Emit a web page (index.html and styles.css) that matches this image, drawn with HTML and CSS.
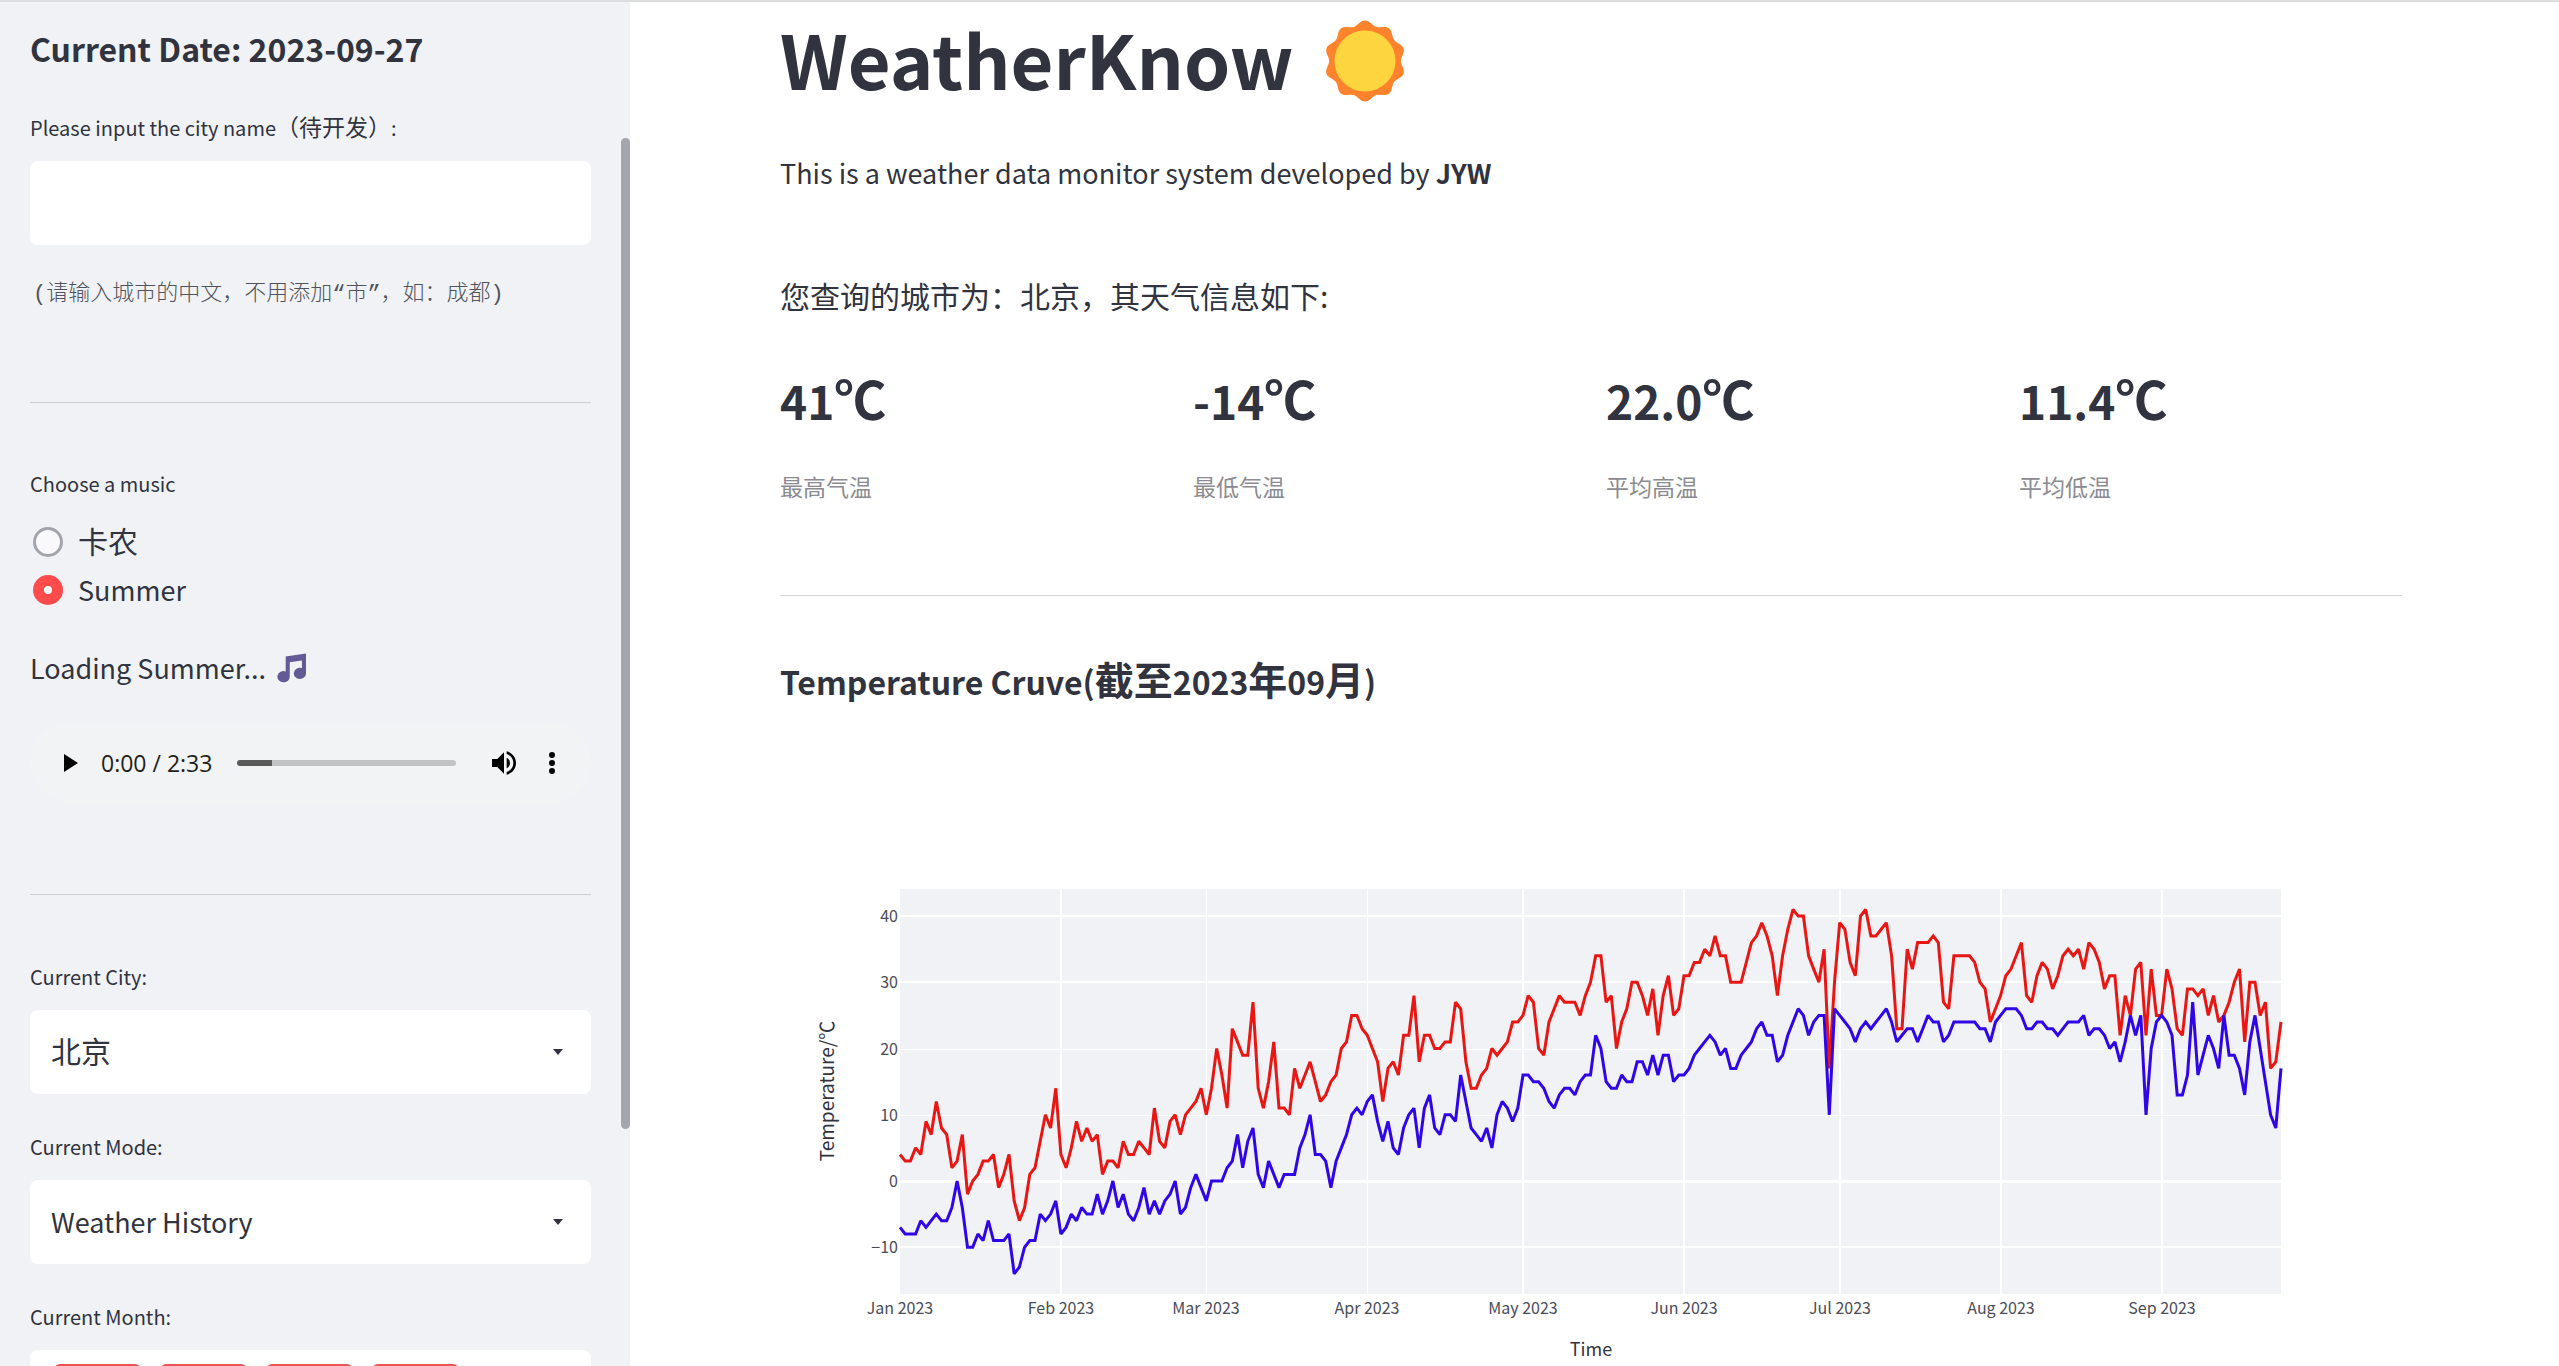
FILE: index.html
```html
<!DOCTYPE html>
<html lang="en">
<head>
<meta charset="utf-8">
<title>WeatherKnow</title>
<link rel="stylesheet" href="styles.css">
</head>
<body>
<div class="app">
  <aside class="sidebar">
    <h3 class="date">Current Date: 2023-09-27</h3>

    <label class="label" for="city-name">Please input the city name<span class="cjk">（待开发）</span>:</label>
    <input class="field" id="city-name" type="text">
    <p class="hint">(请输入城市的中文，不用添加“市”，如：成都)</p>

    <hr class="rule">

    <fieldset class="music">
      <legend class="label">Choose a music</legend>
      <label class="option"><input class="radio" type="radio" name="music"><span class="option-cjk">卡农</span></label>
      <label class="option"><input class="radio" type="radio" name="music" checked><span>Summer</span></label>
    </fieldset>
    <p class="loading">Loading Summer...
      <svg class="note" viewBox="0 0 30 30" aria-hidden="true"><path fill="#635994" d="M9 3.2 30 0v20.5a6.3 5.8 0 1 1-4.2-5.4V7.2L13.200 9v15a6.400 5.800 0 1 1-4.200-5.400z"/></svg>
    </p>

    <div class="player">
      <button class="icon-button play" type="button" aria-label="Play"><svg viewBox="0 0 14 18" width="14" height="18"><path d="M0 0v18l14-9z"/></svg></button>
      <span class="time">0:00 / 2:33</span>
      <input class="seek" type="range" min="0" max="153" value="0" aria-label="Seek">
      <button class="icon-button volume" type="button" aria-label="Mute"><svg viewBox="3 3 18 18" width="24" height="24"><path d="M3 9v6h4l5 5V4L7 9H3zm13.500 3A4.500 4.500 0 0 0 14 7.970v8.050c1.480-.73 2.500-2.250 2.500-4.020zM14 3.230v2.060c2.890.86 5 3.540 5 6.710s-2.110 5.850-5 6.710v2.060c4.010-.91 7-4.490 7-8.770s-2.990-7.860-7-8.770z"/></svg></button>
      <button class="icon-button more" type="button" aria-label="More options"><svg viewBox="0 0 6 22" width="6" height="22"><circle cx="3" cy="3" r="3"/><circle cx="3" cy="11" r="3"/><circle cx="3" cy="19" r="3"/></svg></button>
    </div>

    <hr class="rule rule-player">

    <label class="label" for="city">Current City:</label>
    <div class="select">
      <select class="field field-cjk" id="city"><option>北京</option></select>
      <svg class="caret" viewBox="0 0 10 6" width="10" height="6" aria-hidden="true"><path d="M0 0h10L5 6z"/></svg>
    </div>
    <label class="label label-next" for="mode">Current Mode:</label>
    <div class="select">
      <select class="field" id="mode"><option>Weather History</option></select>
      <svg class="caret" viewBox="0 0 10 6" width="10" height="6" aria-hidden="true"><path d="M0 0h10L5 6z"/></svg>
    </div>
    <p class="label label-next">Current Month:</p>
    <div class="tags">
      <span class="tag"></span><span class="tag"></span><span class="tag"></span><span class="tag"></span>
    </div>
    <div class="scroll-thumb"></div>
  </aside>

  <main class="main">
    <h1 class="title">WeatherKnow
      <svg class="sun" viewBox="0 0 78 82" aria-hidden="true"><path id="sun-rays" fill="#ff822d"/><circle cx="39" cy="41" r="30.500" fill="#fcd53f"/></svg>
    </h1>
    <p class="intro">This is a weather data monitor system developed by <strong>JYW</strong></p>
    <p class="query">您查询的城市为：北京，其天气信息如下:</p>

    <section class="metrics">
      <div><h2 class="value">41<span class="unit">℃</span></h2><p class="caption">最高气温</p></div>
      <div><h2 class="value">-14<span class="unit">℃</span></h2><p class="caption">最低气温</p></div>
      <div><h2 class="value">22.0<span class="unit">℃</span></h2><p class="caption">平均高温</p></div>
      <div><h2 class="value">11.4<span class="unit">℃</span></h2><p class="caption">平均低温</p></div>
    </section>

    <hr class="rule rule-main">

    <h3 class="chart-title">Temperature Cruve(<span class="title-cjk">截至</span>2023<span class="title-cjk">年</span>09<span class="title-cjk">月</span>)</h3>
    <svg class="chart" id="chart" viewBox="0 0 1622 496" role="img" aria-label="Temperature by day"></svg>
  </main>
</div>
<script src="chart.js"></script>
</body>
</html>
```
FILE: styles.css
```css
* { box-sizing: border-box; }

body {
  margin: 0;
  color: #31333f;
  background: #fff;
  font: 27px/48px "Noto Sans CJK SC", "Noto Sans", sans-serif;
}

h1, h2, h3, p { margin: 0; font-weight: 700; }
p { font-weight: 400; }

.app {
  display: grid;
  grid-template-columns: 630px minmax(0, 1fr);
  height: 100vh;
  overflow: hidden;
  border-top: 2px solid #dcdddf;
}

/* Sidebar */
.sidebar {
  position: relative;
  padding: 24px 39px 0 30px;
  background: #f0f2f6;
  overflow: hidden;
}
.date { margin-bottom: 43px; font-size: 32px; line-height: 44px; }
.label {
  display: block;
  padding: 0;
  margin-bottom: 18px;
  font-size: 20px;
  line-height: 30px;
}
.label-next { margin-top: 38px; }
.cjk { font-size: 23px; line-height: 1; }
.field {
  display: block;
  width: 100%;
  height: 84px;
  padding: 0 21px;
  border: 0;
  border-radius: 8px;
  color: inherit;
  background: #fff;
  font: inherit;
  appearance: none;
}
.field-cjk { padding-bottom: 4px; font-size: 30px; }
.hint {
  margin-top: 34px;
  padding-left: 3px;
  font: 22px/32px "Liberation Mono", "Noto Sans CJK SC", monospace;
  font-weight: 300;
  color: #50525c;
  white-space: nowrap;
}
.rule {
  height: 1px;
  margin: 91px 0 66px;
  border: 0;
  background: #cccdd3;
}
.rule-player { margin-bottom: 67px; }

.music { margin: 0; padding: 0; border: 0; }
.music .label { margin-bottom: 19px; }
.option { display: flex; align-items: center; gap: 15px; height: 48px; padding-left: 3px; }
.option-cjk { padding-bottom: 4px; font-size: 30px; }
.radio {
  width: 30px;
  height: 30px;
  margin: 0;
  border: 3px solid #a3a4ac;
  border-radius: 50%;
  background: #f9f9fb;
  appearance: none;
}
.radio:checked { border: 11px solid #ff4b4b; background: #fff; }
.loading { display: flex; align-items: center; gap: 11px; margin-top: 30px; }
.note { width: 29px; height: 30px; }

.player {
  display: flex;
  align-items: center;
  height: 81px;
  margin-top: 30px;
  padding: 0 36px 0 34px;
  border-radius: 41px;
  background: #f1f3f4;
}
.icon-button { display: flex; padding: 0; border: 0; background: none; }
.time { margin: 0 25px 0 23px; color: #1f1f1f; font: 23px/32px "Open Sans", sans-serif; white-space: nowrap; }
.seek {
  flex: 1;
  min-width: 0;
  height: 6px;
  margin: 0 36px 0 0;
  border-radius: 3px;
  background: linear-gradient(90deg, #5a5a5b 16%, #c1c3c4 16%);
  appearance: none;
}
.seek::-webkit-slider-thumb { width: 1px; height: 1px; appearance: none; }
.more { margin-left: 33px; }

.select { display: grid; align-items: center; }
.select > * { grid-area: 1 / 1; }
.caret { justify-self: end; margin-right: 28px; fill: #31333f; pointer-events: none; }

.tags {
  display: flex;
  gap: 19px;
  height: 84px;
  padding: 14px 24px;
  border-radius: 8px;
  background: #fff;
}
.tag { width: 87px; height: 56px; border-radius: 6px; background: #ea5455; }

.scroll-thumb {
  position: absolute;
  top: 10%;
  right: 0;
  width: 9px;
  height: 991px;
  border-radius: 5px;
  background: #a5a5ac;
}

/* Main column */
.main { padding: 6px 157px 0 150px; overflow: hidden; }
.title { display: flex; align-items: center; gap: 32px; font-size: 74px; line-height: 100px; }
.sun { width: 78px; height: 82px; margin-top: 6px; }
.intro { margin-top: 41px; }
.query { margin-top: 74px; font-size: 30px; }
.metrics { display: grid; grid-template-columns: repeat(4, 1fr); gap: 30px; margin-top: 51px; }
.value { font-size: 46px; line-height: 60px; }
.unit { font-size: 52px; line-height: 1; }
.caption { margin-top: 40px; color: #8b8b91; font-size: 23px; line-height: 32px; }
.rule-main { margin: 93px 0 55px; background: #d6d6d9; }
.chart-title { font-size: 32px; line-height: 60px; }
.title-cjk { font-size: 39px; line-height: 1; }

.chart { display: block; width: 100%; margin-top: 159px; }
.plot { fill: #f0f2f6; }
.grid { stroke: #fff; shape-rendering: crispEdges; }
.tick { fill: #4a4c57; font-size: 16px; }
.axis-title { fill: #31333f; font-size: 18px; }
.axis-title-y { font-size: 19px; }
.series { fill: none; stroke-width: 3; stroke-linejoin: miter; stroke-miterlimit: 2; }
.high { stroke: #e81713; }
.low { stroke: #3006e6; }
```
FILE: chart.js
```js
// Daily high and low temperatures, 1 January to 24 September 2023.
const high = [
  4,3,3,5,4,9,7,12,8,7,2,3,7,-2,0,1,3,3,4,-1,1,4,-3,-6,-4,1,2,6,10,8,14,
  4,2,5,9,6,8,6,7,1,3,3,2,6,4,4,6,5,4,11,6,5,9,10,7,10,11,12,14,
  10,14,20,16,11,23,21,19,19,27,14,11,15,21,11,11,10,17,14,16,18,15,12,13,15,16,20,21,25,25,23,
  22,20,18,12,17,18,16,22,22,28,18,22,22,20,20,21,21,27,26,18,14,14,16,17,20,19,20,21,24,24,
  25,28,27,20,19,24,26,28,27,27,27,25,28,30,34,34,27,28,20,24,26,30,30,28,25,29,22,28,31,25,26,
  31,31,33,33,35,34,37,34,34,30,30,30,33,36,37,39,37,34,28,34,38,41,40,40,34,32,30,35,17,30,
  39,38,33,31,40,41,37,37,38,39,34,23,23,35,32,36,36,36,37,36,27,26,34,34,34,34,33,30,29,24,26,
  28,31,32,34,36,28,27,31,33,32,29,31,34,35,34,35,32,36,35,33,29,31,31,22,28,25,32,33,22,32,25,
  25,32,29,23,22,29,29,28,29,25,28,24,25,27,30,32,21,30,30,25,27,17,18,24
];
const low = [
  -7,-8,-8,-8,-6,-7,-6,-5,-6,-6,-4,0,-4,-10,-10,-8,-9,-6,-9,-9,-9,-8,-14,-13,-10,-9,-9,-5,-6,-5,-3,
  -8,-7,-5,-6,-4,-5,-5,-2,-5,-3,0,-4,-2,-5,-6,-4,-1,-5,-3,-5,-3,-2,0,-5,-4,-1,1,-1,
  -3,0,0,0,2,3,7,2,6,8,1,-1,3,1,-1,1,1,1,5,7,10,4,4,3,-1,3,5,7,10,11,10,
  12,13,9,6,9,5,4,8,10,11,5,11,13,8,7,10,10,9,16,12,8,7,6,8,5,10,12,11,9,11,
  16,16,15,15,14,12,11,13,14,14,13,15,16,16,22,20,15,14,14,16,15,15,18,18,16,19,16,19,19,15,16,
  16,17,19,20,21,22,21,19,20,17,17,19,20,21,23,24,22,22,18,19,22,24,26,25,22,24,25,25,10,26,
  25,24,23,21,23,24,23,24,25,26,24,21,22,23,23,21,23,25,24,24,21,22,24,24,24,24,24,23,23,21,24,
  25,26,26,26,25,23,23,24,24,23,23,22,23,24,24,24,25,22,23,23,22,20,21,18,21,25,22,25,10,20,24,
  25,24,22,13,13,16,27,16,19,22,20,17,25,19,19,17,13,21,25,20,15,10,8,17
];
const months = [["Jan", 0], ["Feb", 31], ["Mar", 59], ["Apr", 90], ["May", 120],
  ["Jun", 151], ["Jul", 181], ["Aug", 212], ["Sep", 243]];

const left = 120, right = 1501, top_ = 19, bottom = 424;
const x = day => left + day * (right - left) / 266;
const y = deg => 311 - deg * 6.623;

const chart = document.getElementById("chart");
function add(name, attrs, text) {
  const el = document.createElementNS("http://www.w3.org/2000/svg", name);
  for (const key in attrs) el.setAttribute(key, attrs[key]);
  if (text) el.textContent = text;
  chart.appendChild(el);
}

add("rect", { class: "plot", x: left, y: top_, width: right - left, height: bottom - top_ });
for (const [name, day] of months) {
  const px = Math.round(x(day));
  if (day) {
    add("line", { class: "grid", x1: px, x2: px, y1: top_, y2: bottom,
      "stroke-width": name === "Mar" || name === "Apr" ? 1 : 2 });
  }
  add("text", { class: "tick", x: px, y: 444, "text-anchor": "middle" }, name + " 2023");
}
for (const deg of [-10, 0, 10, 20, 30, 40]) {
  const py = Math.round(y(deg));
  add("line", { class: "grid", x1: left, x2: right, y1: py, y2: py,
    "stroke-width": deg === 0 ? 3 : deg === 10 || deg === 20 ? 1 : 2 });
  add("text", { class: "tick", x: left - 2, y: py + 6, "text-anchor": "end" }, String(deg).replace("-", "−"));
}
const points = data => data.map((deg, day) => x(day).toFixed(1) + "," + y(deg).toFixed(1)).join(" ");
add("polyline", { class: "series high", points: points(high) });
add("polyline", { class: "series low", points: points(low) });
add("text", { class: "axis-title", x: 811, y: 486, "text-anchor": "middle" }, "Time");
add("text", { class: "axis-title axis-title-y", transform: "translate(54 221) rotate(-90)", "text-anchor": "middle" }, "Temperature/℃");

// Scalloped outline of the sun: ten rounded rays.
const rays = [];
for (let a = 0; a < 360; a += 3) {
  const t = a * Math.PI / 180;
  const r = 38.200 + 2.400 * Math.cos(10 * t);
  rays.push((39 + r * Math.sin(t)).toFixed(1) + " " + (41 - r * Math.cos(t)).toFixed(1));
}
document.getElementById("sun-rays").setAttribute("d", "M" + rays.join("L") + "z");
```
